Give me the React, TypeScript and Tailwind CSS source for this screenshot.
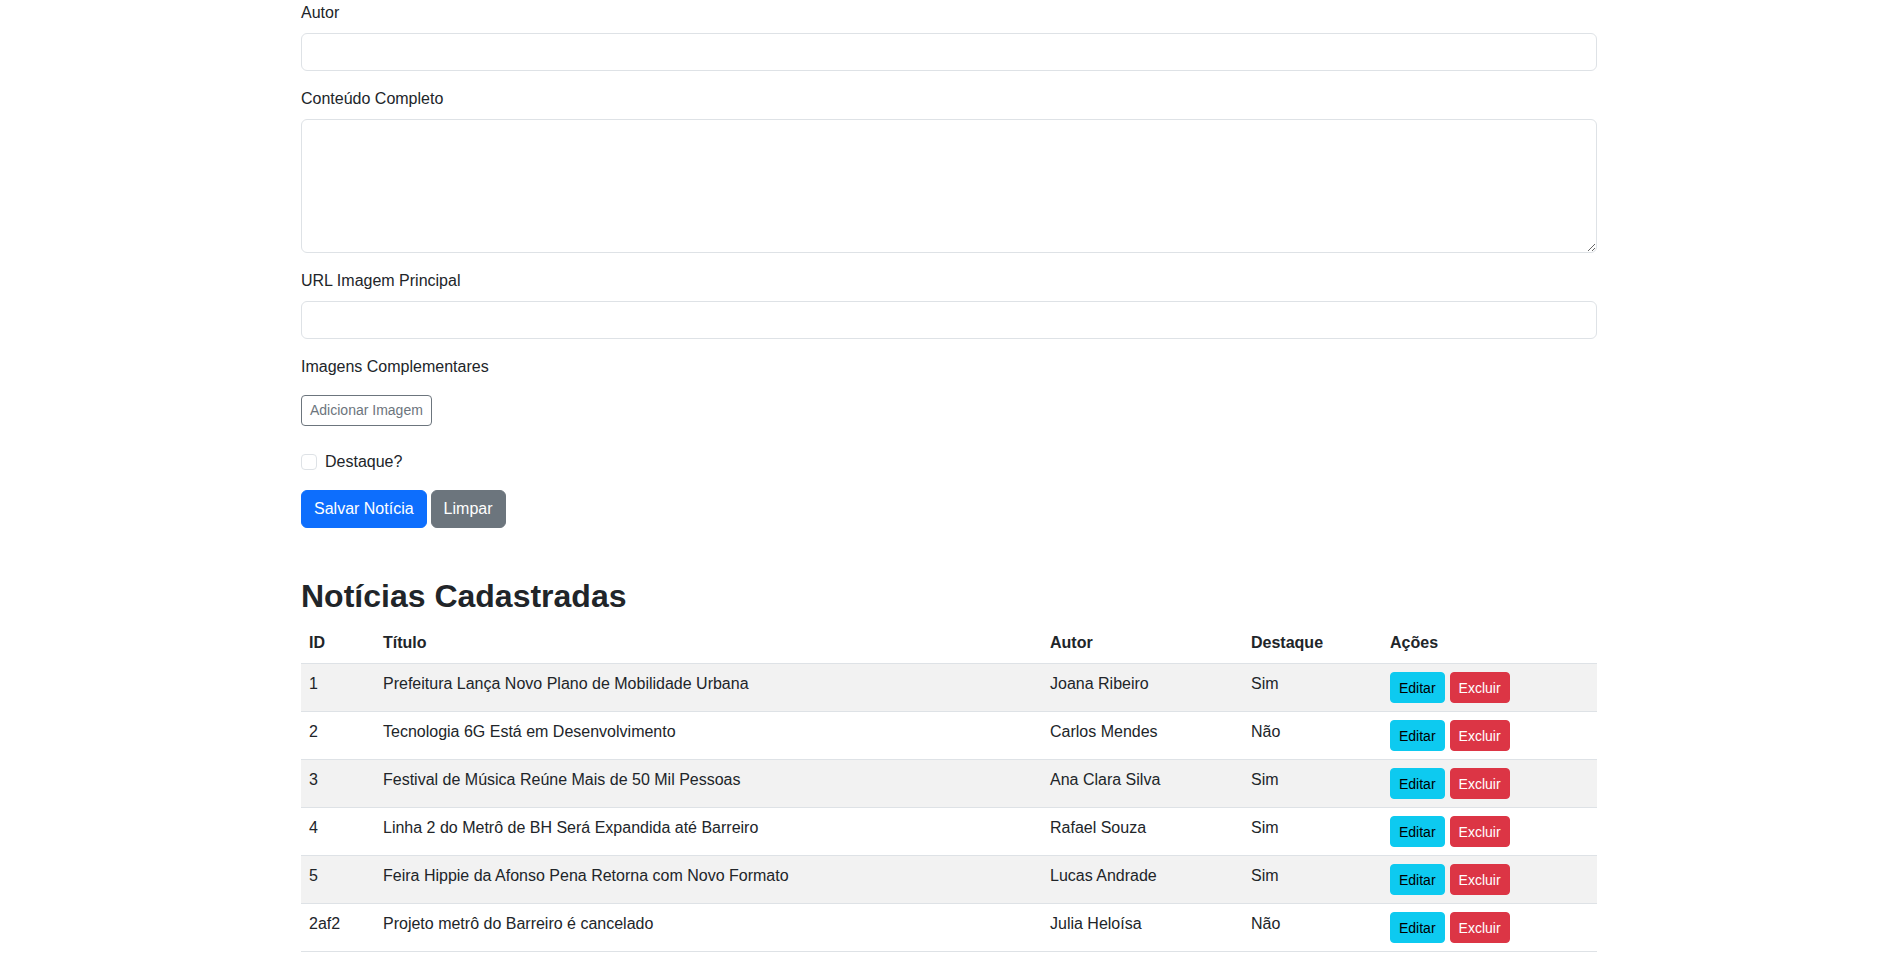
import React from "react";

const noticias = [
  { id: "1", titulo: "Prefeitura Lança Novo Plano de Mobilidade Urbana", autor: "Joana Ribeiro", destaque: "Sim" },
  { id: "2", titulo: "Tecnologia 6G Está em Desenvolvimento", autor: "Carlos Mendes", destaque: "Não" },
  { id: "3", titulo: "Festival de Música Reúne Mais de 50 Mil Pessoas", autor: "Ana Clara Silva", destaque: "Sim" },
  { id: "4", titulo: "Linha 2 do Metrô de BH Será Expandida até Barreiro", autor: "Rafael Souza", destaque: "Sim" },
  { id: "5", titulo: "Feira Hippie da Afonso Pena Retorna com Novo Formato", autor: "Lucas Andrade", destaque: "Sim" },
  { id: "2af2", titulo: "Projeto metrô do Barreiro é cancelado", autor: "Julia Heloísa", destaque: "Não" },
];

function Field({ label, children }: { label: string; children: React.ReactNode }) {
  return (
    <div className="mb-4">
      <label className="block mb-2 leading-6">{label}</label>
      {children}
    </div>
  );
}

export default function App() {
  return (
    <div
      className="min-h-screen bg-white text-[#212529] text-base leading-6"
      style={{ fontFamily: '"Liberation Sans", Arial, sans-serif' }}
    >
      <div className="w-[1296px] ml-[301px] pt-[1px]">
        <form onSubmit={(e) => e.preventDefault()}>
          <Field label="Autor">
            <input
              type="text"
              className="block w-full h-[38px] px-3 border border-[#dee2e6] rounded-[6px] outline-none"
            />
          </Field>

          <Field label="Conteúdo Completo">
            <textarea
              rows={5}
              className="block w-full h-[134px] px-3 py-[6px] border border-[#dee2e6] rounded-[6px] outline-none"
            />
          </Field>

          <Field label="URL Imagem Principal">
            <input
              type="text"
              className="block w-full h-[38px] px-3 border border-[#dee2e6] rounded-[6px] outline-none"
            />
          </Field>

          <div className="mb-6">
            <label className="block leading-6">Imagens Complementares</label>
            <button
              type="button"
              className="mt-4 h-[31px] px-2 text-sm leading-[21px] text-[#6c757d] border border-[#6c757d] rounded-[4px] bg-white"
            >
              Adicionar Imagem
            </button>
          </div>

          <div className="mb-4 flex items-center h-6">
            <input
              type="checkbox"
              className="appearance-none w-4 h-4 border border-[#dee2e6] rounded-[4px] bg-white"
            />
            <label className="ml-2">Destaque?</label>
          </div>

          <div className="flex gap-[4px]">
            <button
              type="submit"
              className="h-[38px] px-3 bg-[#0d6efd] text-white border border-[#0d6efd] rounded-[6px]"
            >
              Salvar Notícia
            </button>
            <button
              type="reset"
              className="h-[38px] px-3 bg-[#6c757d] text-white border border-[#6c757d] rounded-[6px]"
            >
              Limpar
            </button>
          </div>
        </form>

        <h2 className="mt-[49px] mb-2 text-[32px] leading-[1.2] font-bold">Notícias Cadastradas</h2>

        <table className="w-full table-fixed border-collapse">
          <colgroup>
            <col className="w-[74px]" />
            <col className="w-[667px]" />
            <col className="w-[201px]" />
            <col className="w-[139px]" />
            <col className="w-[215px]" />
          </colgroup>
          <thead>
            <tr className="border-b border-[#dee2e6]">
              <th className="p-2 text-left font-bold">ID</th>
              <th className="p-2 text-left font-bold">Título</th>
              <th className="p-2 text-left font-bold">Autor</th>
              <th className="p-2 text-left font-bold">Destaque</th>
              <th className="p-2 text-left font-bold">Ações</th>
            </tr>
          </thead>
          <tbody>
            {noticias.map((n, i) => (
              <tr
                key={n.id}
                className={`border-b border-[#dee2e6] align-top ${i % 2 === 0 ? "bg-[#f2f2f2]" : "bg-white"}`}
              >
                <td className="p-2">{n.id}</td>
                <td className="p-2">{n.titulo}</td>
                <td className="p-2">{n.autor}</td>
                <td className="p-2">{n.destaque}</td>
                <td className="p-2">
                  <div className="flex gap-[5px]">
                    <button className="h-[31px] px-2 text-sm bg-[#0dcaf0] text-black border border-[#0dcaf0] rounded-[4px]">
                      Editar
                    </button>
                    <button className="h-[31px] px-2 text-sm bg-[#dc3545] text-white border border-[#dc3545] rounded-[4px]">
                      Excluir
                    </button>
                  </div>
                </td>
              </tr>
            ))}
          </tbody>
        </table>
      </div>
    </div>
  );
}
